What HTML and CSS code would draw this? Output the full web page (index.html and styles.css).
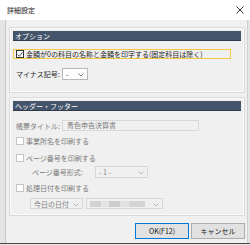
FILE: index.html
```html
<!DOCTYPE html>
<html lang="ja">
<head>
    <meta charset="UTF-8" />
    <title>詳細設定</title>
    <link rel="stylesheet" href="styles.css">
</head>
<body>
    <div class="window">
        <div class="titlebar">
            <span class="title">詳細設定</span>
            <svg class="close" width="8" height="8" viewBox="0 0 8 8"><path d="M0.5 0.5 L7.5 7.5 M7.5 0.5 L0.5 7.5" stroke="#333" stroke-width="1"/></svg>
        </div>

        <div class="client">
            <div class="group">
                <div class="group-head">オプション</div>
                <label class="check focused">
                    <span class="box checked">
                        <svg width="7" height="7" viewBox="0 0 7 7"><path d="M0.8 3.5 L2.8 5.6 L6.3 1" fill="none" stroke="#333" stroke-width="1"/></svg>
                    </span>
                    金額が0の科目の名称と金額を印字する(固定科目は除く)
                </label>
                <div class="row">
                    <span class="label">マイナス記号:</span>
                    <span class="select minus">-<svg class="chev" width="6" height="4" viewBox="0 0 6 4"><path d="M0.5 0.5 L3 3 L5.5 0.5" fill="none" stroke="#555" stroke-width="0.8"/></svg></span>
                </div>
            </div>

            <div class="group second">
                <div class="group-head">ヘッダー・フッター</div>
                <div class="row dim">
                    <span class="label">帳票タイトル:</span>
                    <span class="textbox">青色申告決算書</span>
                </div>
                <label class="check dim first"><span class="box"></span>事業所名を印刷する</label>
                <label class="check dim"><span class="box"></span>ページ番号を印刷する</label>
                <div class="row dim indent">
                    <span class="label">ページ番号形式:</span>
                    <span class="select off page">- 1 -<svg class="chev" width="6" height="4" viewBox="0 0 6 4"><path d="M0.5 0.5 L3 3 L5.5 0.5" fill="none" stroke="#aaa" stroke-width="0.8"/></svg></span>
                </div>
                <label class="check dim tight"><span class="box"></span>処理日付を印刷する</label>
                <div class="row dim date">
                    <span class="select off today">今日の日付<svg class="chev" width="6" height="4" viewBox="0 0 6 4"><path d="M0.5 0.5 L3 3 L5.5 0.5" fill="none" stroke="#aaa" stroke-width="0.8"/></svg></span>
                    <span class="select off blur"><span class="blot"></span><svg class="chev" width="6" height="4" viewBox="0 0 6 4"><path d="M0.5 0.5 L3 3 L5.5 0.5" fill="none" stroke="#aaa" stroke-width="0.8"/></svg></span>
                </div>
            </div>

            <div class="buttons">
                <button class="btn ok">OK(F12)</button>
                <button class="btn">キャンセル</button>
            </div>
        </div>
    </div>
</body>
</html>
```

FILE: styles.css
```css
body {
    margin: 0;
    font-family: "Noto Sans CJK JP", "Noto Sans", sans-serif;
    font-size: 7px;
    color: #1e1e1e;
    background-color: #e6e6e6;
}
.window {
    width: 250px;
    height: 244px;
    box-sizing: border-box;
    background-color: #e4e4e4;
    border-bottom: 1px solid #4a4a4a;
    display: flex;
    flex-direction: column;
}
.titlebar {
    height: 20px;
    background-color: #ffffff;
    display: flex;
    align-items: center;
    justify-content: space-between;
    padding: 0 6px 0 7px;
    flex-shrink: 0;
}
.title {
    font-size: 7px;
    color: #222;
}
.client {
    flex: 1;
    margin: 0 2px 0 5px;
    background-color: #f0f0f0;
    border-left: 1px solid #c8c8c8;
    border-right: 1px solid #d0d0d0;
    padding: 7px 2px 0 3px;
    display: flex;
    flex-direction: column;
}
.group {
    border: 1px solid #dadada;
    box-shadow: inset 0 0 0 1px #fafafa;
    padding: 3px 3px 12px 3px;
}
.group.second {
    margin-top: 4px;
    padding-bottom: 6px;
}
.group-head {
    background-color: #44546a;
    color: #ffffff;
    height: 10px;
    line-height: 10px;
    box-sizing: border-box;
    padding-left: 2px;
    border-bottom: 1px solid #2f3b4a;
}
.check {
    display: flex;
    align-items: center;
    height: 10px;
    margin-top: 7px;
    padding-left: 3px;
    box-sizing: border-box;
}
.check.first {
    margin-top: 5px;
}
.check.tight {
    margin-top: 5px;
}
.check.focused {
    margin-top: 8px;
    border: 1px solid #f5c842;
    margin-right: 10px;
    padding-left: 2px;
}
.box {
    width: 8px;
    height: 8px;
    box-sizing: border-box;
    border: 1px solid #a0a0a0;
    background-color: #ffffff;
    margin-right: 2px;
    display: flex;
    align-items: center;
    justify-content: center;
    flex-shrink: 0;
}
.box.checked {
    border-color: #333;
}
.row {
    display: flex;
    align-items: center;
    margin-top: 9px;
    padding-left: 3px;
}
.label {
    width: 46px;
}
.indent {
    margin-top: 3px;
    padding-left: 19px;
}
.indent .label {
    width: 63px;
}
.select {
    position: relative;
    display: inline-flex;
    align-items: center;
    height: 12px;
    box-sizing: border-box;
    border: 1px solid #b8b8b8;
    background-color: #fdfdfd;
    padding-left: 3px;
}
.select.off {
    background-color: #f0f0f0;
    border-color: #d8d8d8;
    color: #808080;
}
.chev {
    position: absolute;
    right: 3px;
    top: 4px;
}
.minus {
    width: 26px;
}
.page {
    width: 53px;
}
.date {
    margin-top: 5px;
    padding-left: 17px;
}
.date .select {
    height: 11px;
}
.today {
    width: 53px;
}
.blur {
    width: 77px;
    margin-left: 3px;
}
.blot {
    width: 55px;
    height: 6px;
    background: linear-gradient(90deg, #d2d2d2 0 20%, #e4e4e4 20% 35%, #cdcdcd 35% 55%, #e2e2e2 55% 70%, #d5d5d5 70% 100%);
}
.textbox {
    width: 137px;
    height: 11px;
    box-sizing: border-box;
    border: 1px solid #d8d8d8;
    padding-left: 4px;
    line-height: 9px;
}
.dim {
    color: #7a7a7a;
}
.dim .box {
    border-color: #c4c4c4;
}
.buttons {
    display: flex;
    justify-content: flex-end;
    gap: 2px;
    margin-top: 7px;
}
.btn {
    font-family: "Noto Sans CJK JP", "Noto Sans", sans-serif;
    font-size: 7px;
    color: #222;
    height: 16px;
    width: 54px;
    padding: 0;
    background-color: #e1e1e1;
    border: 1px solid #adadad;
}
.btn.ok {
    border-color: #0078d7;
}
```
